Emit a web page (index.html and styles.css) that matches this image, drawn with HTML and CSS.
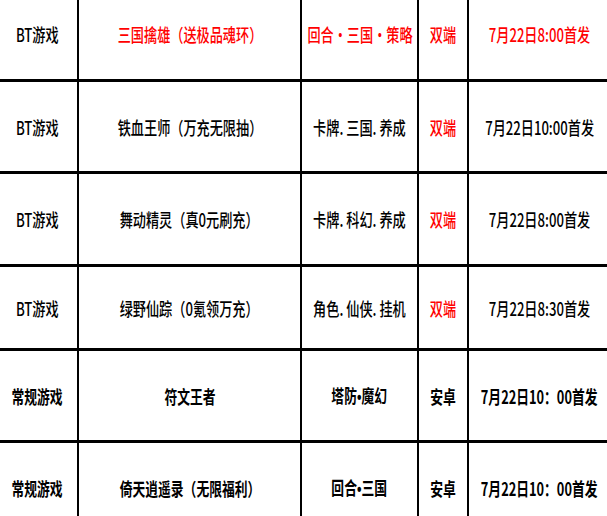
FILE: index.html
```html
<!DOCTYPE html>
<html lang="zh-CN">
<head>
<meta charset="utf-8">
<title>开服表</title>
<link rel="stylesheet" href="styles.css">
</head>
<body>
<div class="grid">
  <div class="cell"><span class="t">BT游戏</span></div>
  <div class="cell red"><span class="t">三国擒雄（送极品魂环）</span></div>
  <div class="cell red"><span class="t">回合・三国・策略</span></div>
  <div class="cell red"><span class="t">双端</span></div>
  <div class="cell red"><span class="t">7月22日8:00首发</span></div>

  <div class="cell"><span class="t">BT游戏</span></div>
  <div class="cell"><span class="t">铁血王师（万充无限抽）</span></div>
  <div class="cell"><span class="t">卡牌. 三国. 养成</span></div>
  <div class="cell red"><span class="t">双端</span></div>
  <div class="cell"><span class="t">7月22日10:00首发</span></div>

  <div class="cell"><span class="t">BT游戏</span></div>
  <div class="cell"><span class="t">舞动精灵（真0元刷充）</span></div>
  <div class="cell"><span class="t">卡牌. 科幻. 养成</span></div>
  <div class="cell red"><span class="t">双端</span></div>
  <div class="cell"><span class="t">7月22日8:00首发</span></div>

  <div class="cell"><span class="t">BT游戏</span></div>
  <div class="cell"><span class="t">绿野仙踪（0氪领万充）</span></div>
  <div class="cell"><span class="t">角色. 仙侠. 挂机</span></div>
  <div class="cell red"><span class="t">双端</span></div>
  <div class="cell"><span class="t">7月22日8:30首发</span></div>

  <div class="cell"><span class="t alt">常规游戏</span></div>
  <div class="cell"><span class="t alt">符文王者</span></div>
  <div class="cell"><span class="t alt">塔防<span class="dot">•</span>魔幻</span></div>
  <div class="cell"><span class="t alt">安卓</span></div>
  <div class="cell"><span class="t alt">7月22日10：00首发</span></div>

  <div class="cell"><span class="t alt">常规游戏</span></div>
  <div class="cell"><span class="t alt">倚天逍遥录（无限福利）</span></div>
  <div class="cell"><span class="t alt">回合<span class="dot">•</span>三国</span></div>
  <div class="cell"><span class="t alt">安卓</span></div>
  <div class="cell"><span class="t alt">7月22日10：00首发</span></div>
</div>
</body>
</html>
```
FILE: styles.css
```css
html, body {
  margin: 0;
  padding: 0;
  background: #fff;
  overflow: hidden;
}
body {
  width: 607px;
  height: 516px;
}
.grid {
  display: grid;
  grid-template-columns: 80px 221px 115px 48px 141px;
  grid-template-rows: 90px 89px 90px 81px 89px 90px;
  column-gap: 2px;
  row-gap: 3px;
  padding: 3px 2px;
  margin: -14px 0 0 -5px;
  width: max-content;
  background: #000;
  font-family: "Noto Sans CJK SC", "Noto Sans", sans-serif;
  font-weight: 500;
  font-size: 18px;
  color: #000;
}
.cell {
  background: #fff;
  display: flex;
  align-items: center;
  justify-content: center;
  white-space: nowrap;
}
.red {
  color: #ff0000;
}
.t {
  display: inline-block;
  transform: scaleX(0.73);
  line-height: 1;
}
.t.alt {
  font-weight: 700;
  transform: scaleX(0.71);
}
.dot {
  font-family: "Liberation Sans", sans-serif;
  font-weight: 700;
}
```
